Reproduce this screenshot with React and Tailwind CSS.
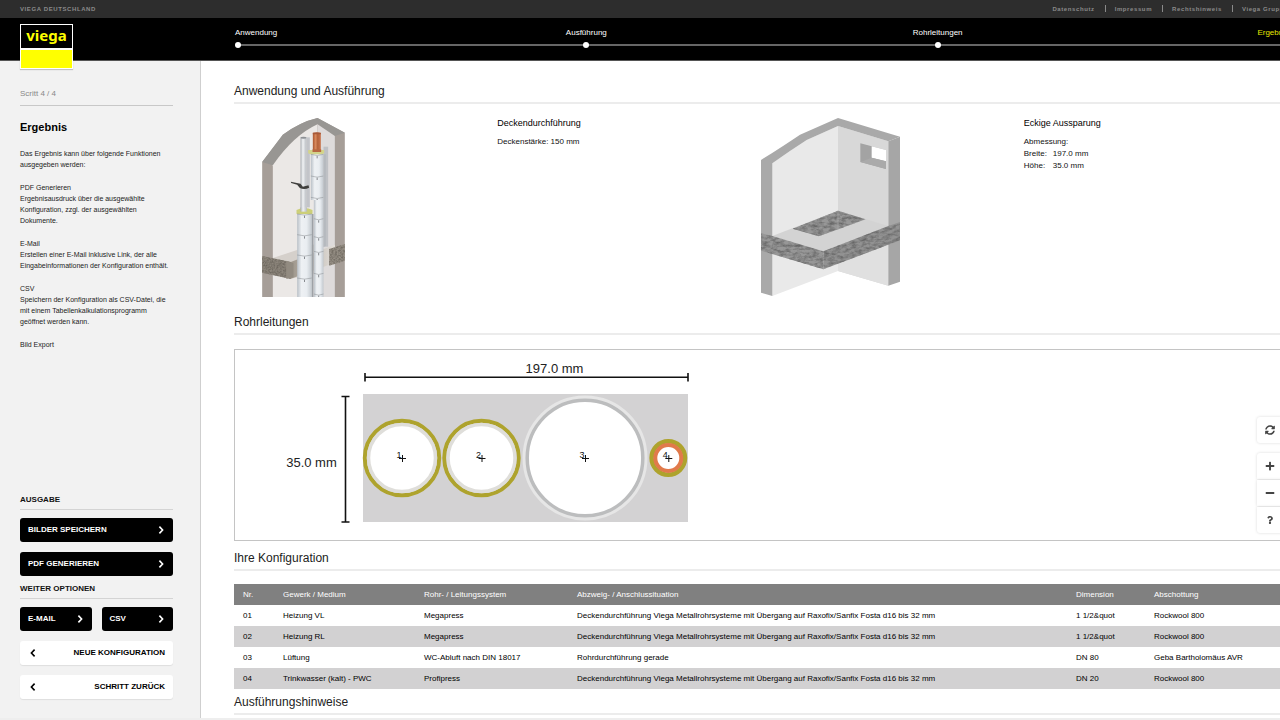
import { FaSyncAlt, FaPlus, FaMinus, FaQuestion } from "react-icons/fa";

const steps = [
  { label: "Anwendung", align: "items-start" },
  { label: "Ausführung", align: "items-center" },
  { label: "Rohrleitungen", align: "items-center" },
  { label: "Ergebnis", align: "items-end", active: true },
];

const footerLinks = ["Datenschutz", "Impressum", "Rechtshinweis", "Viega Gruppe"];

const helpTexts = [
  { text: "Das Ergebnis kann über folgende Funktionen ausgegeben werden:" },
  {
    title: "PDF Generieren",
    text: "Ergebnisausdruck über die ausgewählte Konfiguration, zzgl. der ausgewählten Dokumente.",
  },
  {
    title: "E-Mail",
    text: "Erstellen einer E-Mail inklusive Link, der alle Eingabeinformationen der Konfiguration enthält.",
  },
  {
    title: "CSV",
    text: "Speichern der Konfiguration als CSV-Datei, die mit einem Tabellenkalkulationsprogramm geöffnet werden kann.",
  },
  { title: "Bild Export" },
];

const fosta =
  "Deckendurchführung Viega Metallrohrsysteme mit Übergang auf Raxofix/Sanfix Fosta d16 bis 32 mm";

const rows = [
  ["01", "Heizung VL", "Megapress", fosta, "1 1/2&quot", "Rockwool 800"],
  ["02", "Heizung RL", "Megapress", fosta, "1 1/2&quot", "Rockwool 800"],
  ["03", "Lüftung", "WC-Abluft nach DIN 18017", "Rohrdurchführung gerade", "DN 80", "Geba Bartholomäus AVR"],
  ["04", "Trinkwasser (kalt) - PWC", "Profipress", fosta, "DN 20", "Rockwool 800"],
];

function Chevron({ left }) {
  return (
    <svg viewBox="0 0 6 8" className="h-2 w-1.5 shrink-0" fill="none" stroke="currentColor" strokeWidth="1.6" aria-hidden="true">
      <path d={left ? "M4.6 .6 1.4 4l3.2 3.4" : "M1.4 .6 4.6 4 1.4 7.4"} />
    </svg>
  );
}

function DarkButton({ children }) {
  return (
    <button className="flex h-6 w-full items-center justify-between rounded-[3px] bg-black pr-[9px] pl-2 text-[8px] font-bold text-white">
      {children}
      <Chevron />
    </button>
  );
}

function LightButton({ children }) {
  return (
    <button className="flex h-6 w-full items-center justify-between rounded-[3px] bg-white px-2 text-[8px] font-bold text-black shadow-[0_1px_1px_rgba(0,0,0,0.08)]">
      <span className="pl-0.5">
        <Chevron left />
      </span>
      {children}
    </button>
  );
}

function SideHeading({ children }) {
  return (
    <h2 className="-my-0.5 border-b border-[#d4d4d4] pb-1 text-[8px] leading-[10px] font-bold text-[#111]">
      {children}
    </h2>
  );
}

function SectionHeading({ children }) {
  return (
    <h2 className="border-b-2 border-[#ececec] pb-[3px] text-[12px] leading-4 text-[#222]">
      {children}
    </h2>
  );
}

function Insulation({ x, w, top, bottom, joints }) {
  return (
    <g>
      <rect x={x} y={top} width={w} height={bottom - top} fill="url(#shell)" />
      {joints.map((y) => (
        <g key={y}>
          <path d={`M${x} ${y}q${w / 2} 7 ${w} 0`} fill="none" stroke="#8b8f94" strokeWidth="1.6" />
          <path d={`M${x + w / 2} ${y + 5}v7`} stroke="#55585c" strokeWidth="2" />
        </g>
      ))}
    </g>
  );
}

function CeilingPicture() {
  return (
    <svg viewBox="66 54 248 537" className="h-[179px] w-[83px]" role="img" aria-label="Deckendurchführung">
      <defs>
        <linearGradient id="shell">
          <stop offset="0" stopColor="#b9c0c7" />
          <stop offset=".3" stopColor="#eef1f4" />
          <stop offset=".65" stopColor="#e9edf1" />
          <stop offset="1" stopColor="#c2c8ce" />
        </linearGradient>
        <linearGradient id="copper">
          <stop offset="0" stopColor="#a8552f" />
          <stop offset=".35" stopColor="#d98a5e" />
          <stop offset=".6" stopColor="#b4623a" />
          <stop offset="1" stopColor="#c97650" />
        </linearGradient>
        <linearGradient id="steel">
          <stop offset="0" stopColor="#a9adb2" />
          <stop offset=".4" stopColor="#f1f3f5" />
          <stop offset="1" stopColor="#b7bbc0" />
        </linearGradient>
        <linearGradient id="slabEdge">
          <stop offset="0" stopColor="#9d958a" />
          <stop offset="1" stopColor="#e4e0db" />
        </linearGradient>
        <filter id="grain" x="0" y="0" width="100%" height="100%" colorInterpolationFilters="sRGB">
          <feTurbulence type="fractalNoise" baseFrequency=".2" numOctaves="3" result="n" />
          <feColorMatrix in="n" values="0 0 0 0 .36  0 0 0 0 .34  0 0 0 0 .31  1.4 0 0 0 -.45" />
          <feComposite in2="SourceGraphic" operator="in" result="g" />
          <feMerge>
            <feMergeNode in="SourceGraphic" />
            <feMergeNode in="g" />
          </feMerge>
        </filter>
      </defs>
      <path d="M66 186 128 104Q180 66 232 54L314 98V591H66Z" fill="#a69e98" />
      <path d="M66 186 128 104Q180 66 232 54L314 98 284 108 232 73Q160 106 98 196Z" fill="#989693" />
      <path d="M98 196Q160 106 232 73V591H98Z" fill="#ebe8e6" />
      <path d="M232 73 284 108V591H232Z" fill="#dedbdb" />
      <path d="M250 140h14v300h-14z" fill="#bfc1c5" />
      <path d="M98 474 232 430V520L152 536Z" fill="#d5d0cb" />
      <path d="M152 486 284 434V488L152 536Z" fill="url(#slabEdge)" />
      <path d="M66 468 152 486V537L66 518Z" fill="#8c857b" filter="url(#grain)" />
      <path d="M138 482 160 490V532L138 536Z" fill="#928b81" />
      <path d="M267 447 314 432V482L267 497Z" fill="#958e84" filter="url(#grain)" />
      <path d="M199 112h10v210h-10z" fill="#c2c4c9" />
      <rect x="218" y="98" width="24" height="60" fill="url(#copper)" />
      <path d="M218 99q12-5 24 0v4h-24z" fill="#a75a3a" />
      <path d="M204 150h48v10q-24 14-48 0z" fill="#d3d48a" />
      <path d="M217 148h26v8h-26z" fill="#b76842" />
      <Insulation x={212} w={38} top={163} bottom={300} joints={[163, 228, 292]} />
      <Insulation x={221} w={29} top={300} bottom={591} joints={[356, 410, 454, 520, 582]} />
      <path d="M250 163h7v275l-7 3z" fill="#b5b9be" />
      <rect x="181" y="112" width="18" height="222" fill="url(#steel)" />
      <ellipse cx="190" cy="113" rx="9" ry="3" fill="#8e9195" />
      <path d="M152 245 181 251 188 260 205 256 207 263Q193 270 179 264L171 254 153 249Z" fill="#3e3e3c" />
      <path d="M169 330q24-12 48 0v11q-24 13-48 0z" fill="#cccf79" />
      <path d="M181 322h19v13h-19z" fill="url(#steel)" />
      <Insulation x={171} w={44} top={342} bottom={591} joints={[342, 404, 465, 534]} />
      <path d="M215 342h5v249h-5z" fill="#9da1a6" />
    </svg>
  );
}

function RecessPicture() {
  return (
    <svg viewBox="63 54 417 537" className="h-[179px] w-[139px]" role="img" aria-label="Eckige Aussparung">
      <defs>
        <filter id="stone" x="0" y="0" width="100%" height="100%" colorInterpolationFilters="sRGB">
          <feTurbulence type="fractalNoise" baseFrequency=".06 .12" numOctaves="4" result="n" />
          <feColorMatrix in="n" values="0 0 0 0 .4  0 0 0 0 .4  0 0 0 0 .4  2 0 0 0 -.7" />
          <feComposite in2="SourceGraphic" operator="in" result="g" />
          <feMerge>
            <feMergeNode in="SourceGraphic" />
            <feMergeNode in="g" />
          </feMerge>
        </filter>
      </defs>
      <path d="M97 190Q150 152 200 120L294 78V513L97 588Z" fill="#e9e9e9" />
      <path d="M294 78 445 124V557L294 513Z" fill="#d8d8d8" />
      <path d="M294 425 445 425V557L294 513Z" fill="#e0e0e0" />
      <path d="M63 180Q130 138 180 104L294 54 480 110 445 124 294 78 200 120Q150 152 97 190V588L63 578Z" fill="#a9a9a9" />
      <path d="M445 124 480 110V545L445 557Z" fill="#a6a6a6" />
      <path d="M361 130 438 150V207L361 186Z" fill="#a3a3a3" />
      <path d="M395 139 438 150V184L395 173Z" fill="#fff" />
      <path d="M361 186 395 173 438 184V207Z" fill="#aaa" />
      <path d="M97 408 294 332 445 378 250 454Z" fill="#d3d3d3" />
      <path d="M158 386 294 332 377 358 297 387 236 409Z" fill="#979797" filter="url(#stone)" />
      <path d="M294 332V388" stroke="#aaa" strokeWidth="2" />
      <path d="M63 400 97 408 250 454V508L63 452Z" fill="#979797" filter="url(#stone)" />
      <path d="M250 454 445 378 480 366V421L250 508Z" fill="#929292" filter="url(#stone)" />
    </svg>
  );
}

const pipes = [
  { n: 1, cx: 402, rings: [[37.2, 4, "#aea32d"], [33.5, 3.5, "#dfdeda"]] },
  { n: 2, cx: 481.5, rings: [[37.2, 4, "#aea32d"], [33.5, 3.5, "#dfdeda"]] },
  { n: 3, cx: 585, rings: [[60.5, 4, "#e6e6e6"], [57.8, 3.5, "#bcbdbe"]] },
  { n: 4, cx: 668.3, rings: [[16.7, 4.5, "#aea32d"], [13, 4, "#e17a4b"]] },
];

function PipeDrawing() {
  return (
    <svg viewBox="235 350 480 190" className="h-[190px] w-[480px]" role="img" aria-label="Rohrleitungen 197.0 mm x 35.0 mm">
      <g stroke="#111" strokeWidth="1.6">
        <path d="M365 377.3H688M365 373v8.500M688 373v8.500M345.500 396.500V522M341.500 396.500h8M341.500 522h8" />
      </g>
      <g fill="#222" fontSize="13" textAnchor="middle">
        <text x="554.500" y="373">197.0 mm</text>
        <text x="311.500" y="467">35.0 mm</text>
      </g>
      <rect x="363" y="394" width="325" height="128" fill="#d3d2d3" />
      {pipes.map((p) => (
        <g key={p.n}>
          <circle cx={p.cx} cy="458" r={p.rings[1][0]} fill="#fff" />
          {p.rings.map(([r, w, color]) => (
            <circle key={color} cx={p.cx} cy="458" r={r} fill="none" stroke={color} strokeWidth={w} />
          ))}
          <path d={`M${p.cx - 3} 458.500h7M${p.cx + 0.5} 455v7`} stroke="#111" />
          <text x={p.cx - 3} y="458" fontSize="9" textAnchor="middle" fill="#111">
            {p.n}
          </text>
        </g>
      ))}
    </svg>
  );
}

const toolButton =
  "flex w-[26px] items-center justify-center bg-white text-[10px] text-[#444] shadow-[0_0_3px_rgba(0,0,0,0.15)]";

export default function App() {
  return (
    <div className="flex min-h-screen flex-col overflow-hidden bg-white font-['Liberation_Sans',Arial,sans-serif] text-[#111]">
      <div className="flex h-[18px] items-center justify-between bg-[#2d2d2d] pl-5 text-[6px] tracking-widest text-[#8a8a8a]">
        <span className="font-bold">VIEGA DEUTSCHLAND</span>
        <nav className="-mr-2 flex items-center" aria-label="Rechtliches">
          {footerLinks.map((l, i) => (
            <a
              key={l}
              href="#"
              className={i ? "relative ml-2.5 pl-2.5 font-bold before:absolute before:left-0 before:h-[7px] before:w-px before:bg-[#8a8a8a]" : "font-bold"}
            >
              {l}
            </a>
          ))}
        </nav>
      </div>

      <header className="flex h-[43px] items-start border-b border-[#555] bg-black pt-1.5 pl-5">
        <a href="#" aria-label="viega" className="relative z-10 flex h-[45px] w-[53px] shrink-0 flex-col gap-0.5 bg-white p-px shadow-[0_1px_1px_rgba(0,0,0,0.2)]">
          <span className="flex h-[23px] items-center justify-center bg-black pb-0.5 font-['Noto_Sans','Open_Sans',sans-serif] text-[15px] leading-none font-bold text-[#ffff00]">
            viega
          </span>
          <span className="flex-1 bg-[#ffff00]" />
        </a>
        <nav className="relative -mr-[9px] ml-[162px] flex-1 pt-1" aria-label="Schritte">
          <div className="absolute inset-x-0.5 top-[20px] h-0.5 bg-[#666]" />
          <ol className="relative grid grid-cols-[1fr_2fr_2fr_1fr] text-[8px] leading-[10px]">
            {steps.map((s) => (
              <li key={s.label} className={`flex flex-col gap-1 ${s.align}`}>
                <a href="#" className={s.active ? "text-[#e6e600]" : "text-white"}>
                  {s.label}
                </a>
                <span className="size-1.5 rounded-full bg-white" />
              </li>
            ))}
          </ol>
        </nav>
      </header>

      <div className="flex flex-1">
        <aside className="flex w-[201px] shrink-0 flex-col border-r border-[#cfcfcf] bg-[#f2f2f2] pr-[27px] pb-[19px] pl-5">
          <p className="mt-7 border-b border-[#c8c8c8] pb-1.5 text-[8px] leading-[10px] text-[#888]">Scritt 4 / 4</p>
          <h1 className="mt-[15px] text-[11px] leading-3 font-bold text-black">Ergebnis</h1>
          <div className="mt-[15px] flex flex-col gap-3 text-[7px] leading-[11px] text-[#222]">
            {helpTexts.map((h, i) => (
              <div key={i}>
                {h.title && <h3>{h.title}</h3>}
                {h.text && <p>{h.text}</p>}
              </div>
            ))}
          </div>
          <div className="mt-auto flex flex-col gap-2.5">
            <SideHeading>AUSGABE</SideHeading>
            <DarkButton>BILDER SPEICHERN</DarkButton>
            <DarkButton>PDF GENERIEREN</DarkButton>
            <SideHeading>WEITER OPTIONEN</SideHeading>
            <div className="grid grid-cols-2 gap-2.5">
              <DarkButton>E-MAIL</DarkButton>
              <DarkButton>CSV</DarkButton>
            </div>
            <LightButton>NEUE KONFIGURATION</LightButton>
            <LightButton>SCHRITT ZURÜCK</LightButton>
          </div>
        </aside>

        <main className="-mr-[7px] min-w-0 flex-1 pt-[22px] pl-[33px]">
          <SectionHeading>Anwendung und Ausführung</SectionHeading>
          <div className="mt-3.5 grid grid-cols-4">
            <div className="pl-7">
              <CeilingPicture />
            </div>
            <div>
              <h3 className="text-[9px] leading-[10px] text-black">Deckendurchführung</h3>
              <p className="mt-2 text-[8px] leading-3">Deckenstärke: 150 mm</p>
            </div>
            <div>
              <RecessPicture />
            </div>
            <div>
              <h3 className="text-[9px] leading-[10px] text-black">Eckige Aussparung</h3>
              <div className="mt-2 text-[8px] leading-3">
                <p>Abmessung:</p>
                <dl className="grid grid-cols-[29px_1fr]">
                  <dt>Breite:</dt>
                  <dd>197.0 mm</dd>
                  <dt>Höhe:</dt>
                  <dd>35.0 mm</dd>
                </dl>
              </div>
            </div>
          </div>

          <div className="mt-[17px]">
            <SectionHeading>Rohrleitungen</SectionHeading>
          </div>
          <div className="relative mt-3.5 border border-[#c4c4c4]">
            <PipeDrawing />
            <div className="absolute top-[67px] right-[3px] flex flex-col">
              <button aria-label="Zurücksetzen" className={`${toolButton} mb-2.5 h-[26px] rounded-[3px]`}>
                <FaSyncAlt />
              </button>
              <button aria-label="Vergrößern" className={`${toolButton} mb-px h-[26px] rounded-t-[3px]`}>
                <FaPlus />
              </button>
              <button aria-label="Verkleinern" className={`${toolButton} mb-px h-[26px]`}>
                <FaMinus />
              </button>
              <button aria-label="Hilfe" className={`${toolButton} h-[26px] rounded-b-[3px]`}>
                <FaQuestion className="size-2" />
              </button>
            </div>
          </div>

          <div className="mt-[9px]">
            <SectionHeading>Ihre Konfiguration</SectionHeading>
          </div>
          <table className="mt-[13px] w-full table-fixed border-collapse text-left text-[8px] leading-[10px] whitespace-nowrap">
            <thead>
              <tr className="h-[21px] bg-[#808080] text-white">
                <th scope="col" className="w-10 pl-[9px] font-normal">Nr.</th>
                <th scope="col" className="w-[141px] pl-[9px] font-normal">Gewerk / Medium</th>
                <th scope="col" className="w-[153px] pl-[9px] font-normal">Rohr- / Leitungssystem</th>
                <th scope="col" className="pl-[9px] font-normal">Abzweig- / Anschlussituation</th>
                <th scope="col" className="w-[78px] pl-[9px] font-normal">Dimension</th>
                <th scope="col" className="w-[142px] pl-[9px] font-normal">Abschottung</th>
              </tr>
            </thead>
            <tbody>
              {rows.map((r) => (
                <tr key={r[0]} className="h-[21px] text-black even:bg-[#d2d1d2]">
                  {r.map((c, i) => (
                    <td key={i} className="pl-[9px]">{c}</td>
                  ))}
                </tr>
              ))}
            </tbody>
          </table>

          <div className="mt-[5px]">
            <SectionHeading>Ausführungshinweise</SectionHeading>
          </div>
        </main>
      </div>
      <footer className="h-0.5 bg-[#eeeeee]" />
    </div>
  );
}
